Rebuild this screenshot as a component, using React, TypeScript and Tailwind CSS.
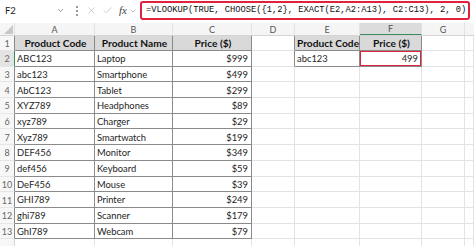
import { Check, ChevronDown, X } from 'lucide-react';

const widths = [15, 80, 78, 79, 43, 65, 62, 43, 9];
const letters = ['', 'A', 'B', 'C', 'D', 'E', 'F', 'G', ''];

const products: [string, string, string][] = [
  ['ABC123', 'Laptop', '$999'],
  ['abc123', 'Smartphone', '$499'],
  ['AbC123', 'Tablet', '$299'],
  ['XYZ789', 'Headphones', '$89'],
  ['xyz789', 'Charger', '$29'],
  ['Xyz789', 'Smartwatch', '$199'],
  ['DEF456', 'Monitor', '$349'],
  ['def456', 'Keyboard', '$59'],
  ['DeF456', 'Mouse', '$39'],
  ['GHI789', 'Printer', '$249'],
  ['ghi789', 'Scanner', '$179'],
  ['GhI789', 'Webcam', '$79'],
];

// row/col are 1-based sheet coords, col 1 = A
const inTable = (r: number, c: number) =>
  (r >= 1 && r <= 13 && c >= 1 && c <= 3) || (r >= 1 && r <= 2 && c >= 5 && c <= 6);

function cellText(r: number, c: number): string {
  if (r === 1) {
    if (c === 1 || c === 5) return 'Product Code';
    if (c === 2) return 'Product Name';
    if (c === 3 || c === 6) return 'Price ($)';
    return '';
  }
  if (c >= 1 && c <= 3 && r <= 13) return products[r - 2][c - 1];
  if (r === 2 && c === 5) return 'abc123';
  if (r === 2 && c === 6) return '499';
  return '';
}

function Cell({ r, c }: { r: number; c: number }) {
  const text = cellText(r, c);
  const header = r === 1 && inTable(r, c);
  const right = (c === 3 && r >= 2) || (r === 2 && c === 6);
  const darkR = inTable(r, c) || inTable(r, c + 1);
  const darkB = inTable(r, c) || inTable(r + 1, c);
  const selected = r === 2 && c === 6;
  return (
    <div
      style={{ width: widths[c] }}
      className={
        'relative shrink-0 h-full border-r border-b flex items-center overflow-hidden whitespace-nowrap pt-[1px] ' +
        (darkR ? 'border-r-[#8a8a8a] ' : 'border-r-[#e3e3e3] ') +
        (darkB ? 'border-b-[#8a8a8a] ' : 'border-b-[#e3e3e3] ') +
        (header ? 'bg-[#d9d9d9] font-bold text-[10.2px] justify-center text-[#111] ' : 'text-[#1e1e1e] ') +
        (right ? 'justify-end pr-[3px] ' : 'pl-[2px] ')
      }
    >
      {text}
      {selected && (
        <div className="absolute -left-[1px] -top-[1px] w-[63px] h-[17px] border-2 border-[#e0223d] rounded-[2px]" />
      )}
    </div>
  );
}

function Row({ r, h }: { r: number; h: string }) {
  const sel = r === 2;
  return (
    <div className={'flex ' + h}>
      <div
        className={
          'w-[15px] shrink-0 h-full flex items-center justify-center pt-[1px] text-[9px] text-[#666] border-r border-b border-b-[#e6e6e6] ' +
          (sel ? 'bg-[#e4e4e4] border-r-[#3f8a5c]' : 'bg-[#f7f7f7] ' + (r <= 13 ? 'border-r-[#8a8a8a]' : 'border-r-[#d6d6d6]'))
        }
      >
        {r <= 13 ? r : ''}
      </div>
      {[1, 2, 3, 4, 5, 6, 7, 8].map((c) => (
        <Cell key={c} r={r} c={c} />
      ))}
    </div>
  );
}

export default function App() {
  const rows = Array.from({ length: 14 }, (_, i) => i + 1);
  return (
    <div
      className="w-[474px] h-[246px] overflow-hidden bg-white text-[9.4px] leading-none"
      style={{ fontFamily: 'Lato, "Liberation Sans", sans-serif' }}
    >
      {/* formula bar */}
      <div className="h-[23px] flex items-start">
        <div className="w-[70px] h-[21px] flex items-center justify-between pl-[5px] pr-[5px] text-[9.5px] text-[#222]">
          <span>F2</span>
          <ChevronDown size={9} strokeWidth={1.6} className="text-[#555]" />
        </div>
        <div className="w-[13px] h-[21px] flex flex-col items-center justify-center gap-[2px]">
          <span className="w-[2px] h-[2px] rounded-full bg-[#777]" />
          <span className="w-[2px] h-[2px] rounded-full bg-[#777]" />
          <span className="w-[2px] h-[2px] rounded-full bg-[#777]" />
        </div>
        <div className="h-[21px] flex items-center gap-[5px] pl-[3px] text-[#aaa]">
          <X size={11} strokeWidth={1.2} />
          <Check size={11} strokeWidth={1.2} />
          <span
            className="text-[#444] italic text-[11px] pl-[1px]"
            style={{ fontFamily: '"Liberation Serif", serif' }}
          >
            fx
          </span>
          <ChevronDown size={8} strokeWidth={1.4} className="text-[#777] -ml-[3px]" />
        </div>
        <div
          className="ml-[3px] mt-[1px] w-[330px] h-[19px] border-2 border-[#e0223d] rounded-[3px] flex items-center pl-[4px] text-[8.75px] text-[#111] whitespace-nowrap"
          style={{ fontFamily: '"Liberation Mono", monospace' }}
        >
          =VLOOKUP(TRUE, CHOOSE({'{'}1,2{'}'}, EXACT(E2,A2:A13), C2:C13), 2, 0)
        </div>
      </div>

      {/* column letters */}
      <div className="flex h-[13px] bg-[#f5f5f5] border-b border-[#d4d4d4]">
        {widths.map((w, i) => (
          <div
            key={i}
            style={{ width: w }}
            className={
              'shrink-0 h-full flex items-center justify-center text-[9px] text-[#555] ' +
              (i === 6 ? 'bg-[#dcdcdc] border-b border-[#3f8a5c] ' : '') +
              (i < 8 ? 'border-r border-r-[#e2e2e2]' : '')
            }
          >
            {i === 0 ? (
              <svg width="9" height="9" viewBox="0 0 9 9" className="ml-[2px] mt-[1px]">
                <path d="M9 0 L9 9 L0 9 Z" fill="#c8c8c8" />
              </svg>
            ) : (
              letters[i]
            )}
          </div>
        ))}
      </div>

      {rows.map((r) => (
        <Row key={r} r={r} h={r === 1 ? 'h-[15px]' : 'h-[15.7px]'} />
      ))}
    </div>
  );
}
